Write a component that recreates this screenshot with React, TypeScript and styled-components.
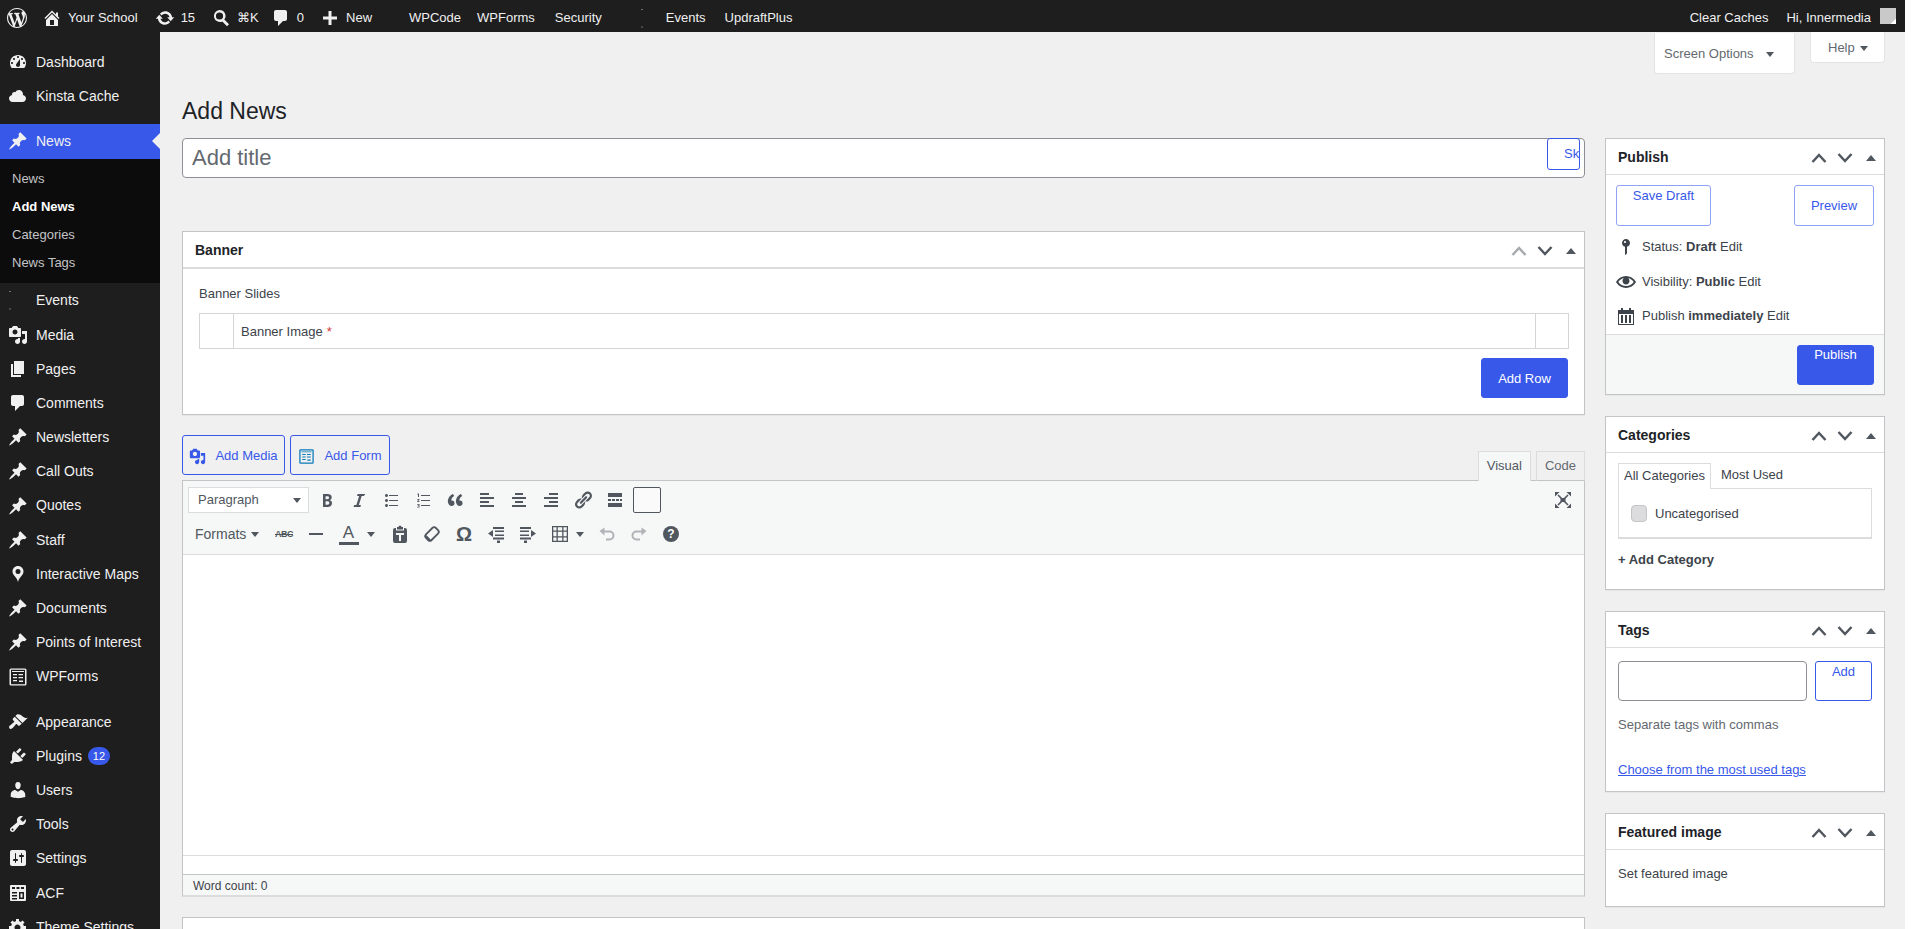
import { ReactNode } from 'react';
import styled, { createGlobalStyle } from 'styled-components';

const BLUE = '#3858e9';

const GlobalStyle = createGlobalStyle`
	html, body {
		margin: 0;
		height: 100%;
		overflow: hidden;
		background: #fff;
	}
	body {
		font-family: "Liberation Sans", Arial, sans-serif;
		font-size: 13px;
		line-height: 1.4;
		color: #3c434a;
	}
	* {
		box-sizing: border-box;
	}
`;

const Page = styled.div`
	width: 1905px;
	height: 929px;
	overflow: hidden;
	display: flex;
	flex-direction: column;
	background: #f0f0f1;
`;

const AdminBar = styled.header`
	flex: none;
	height: 32px;
	padding-top: 4px;
	display: flex;
	justify-content: space-between;
	background: #1e1e1e;
	color: #f0f0f1;
`;

const BarGroup = styled.div`
	display: flex;
	align-items: center;
`;

const BarItem = styled.div<{ $pad?: number; $left?: number }>`
	display: flex;
	align-items: center;
	gap: 6px;
	padding: 0 ${({ $pad }) => $pad ?? 8}px;
	margin-left: ${({ $left }) => $left ?? 0}px;
	white-space: nowrap;
	color: #f0f0f1;
	svg {
		color: #f0f0f1;
	}
`;

const Avatar = styled.span`
	width: 16px;
	height: 16px;
	margin-top: -4px;
	background: linear-gradient(135deg, #c9c9c9 82%, #fff 82%);
`;

const Body = styled.div`
	flex: 1;
	min-height: 0;
	display: flex;
`;

const Sidebar = styled.nav`
	flex: none;
	width: 160px;
	padding-top: 13px;
	background: #1e1e1e;
	overflow: hidden;
`;

const MenuItem = styled.a<{ $active?: boolean }>`
	position: relative;
	display: flex;
	align-items: center;
	height: 34.2px;
	padding-left: 8px;
	font-size: 14px;
	line-height: 18.2px;
	color: #f0f0f1;
	background: ${({ $active }) => ($active ? BLUE : 'transparent')};
	svg {
		flex: none;
		margin-right: 8px;
	}
	${({ $active }) =>
		$active &&
		`
		&::after {
			content: '';
			position: absolute;
			right: 0;
			top: 50%;
			margin-top: -8px;
			border: 8px solid transparent;
			border-right-color: #f0f0f1;
		}
	`}
`;

const MenuSeparator = styled.div`
	height: 11px;
`;

const SubMenu = styled.div`
	padding: 6px 0;
	background: #0c0c0c;
`;

const SubItem = styled.a<{ $current?: boolean }>`
	display: block;
	padding: 5px 12px;
	font-size: 13px;
	line-height: 18.2px;
	color: ${({ $current }) => ($current ? '#fff' : '#c3c4c7')};
	font-weight: ${({ $current }) => ($current ? 700 : 400)};
`;

const Badge = styled.span`
	margin-left: 6px;
	width: 22px;
	height: 18px;
	border-radius: 9px;
	background: ${BLUE};
	color: #fff;
	font-size: 11px;
	line-height: 18px;
	text-align: center;
`;

const Content = styled.main`
	flex: 1;
	min-width: 0;
	padding: 0 20px 0 22px;
	overflow: hidden;
`;

const ScreenMeta = styled.div`
	display: flex;
	justify-content: flex-end;
	align-items: flex-start;
	gap: 15px;
	height: 64px;
`;

const MetaTab = styled.button<{ $h: number; $w: number; $top?: number }>`
	display: flex;
	align-items: center;
	justify-content: space-between;
	width: ${({ $w }) => $w}px;
	height: ${({ $h }) => $h}px;
	margin-top: ${({ $top }) => $top ?? 0}px;
	padding: 3px ${({ $w }) => ($w > 100 ? '20px 0 9px' : '16px 0 17px')};
	background: #fff;
	border: 1px solid #e4e4e7;
	border-top: none;
	border-radius: 0 0 4px 4px;
	font: inherit;
	color: #646970;
`;

const Arrow = styled.span<{ $size?: number; $up?: boolean; $color?: string }>`
	display: inline-block;
	flex: none;
	width: 0;
	height: 0;
	border-left: ${({ $size }) => $size ?? 4}px solid transparent;
	border-right: ${({ $size }) => $size ?? 4}px solid transparent;
	${({ $up, $size, $color }) =>
		`${$up ? 'border-bottom' : 'border-top'}: ${($size ?? 4) + 1}px solid ${$color ?? '#50575e'};`}
`;

const Title = styled.h1`
	margin: 0 0 12px;
	font-size: 23px;
	font-weight: 400;
	line-height: 30px;
	color: #1d2327;
`;

const Columns = styled.div`
	display: flex;
	align-items: flex-start;
	gap: 20px;
`;

const MainColumn = styled.div`
	flex: 1;
	min-width: 0;
`;

const SideColumn = styled.aside`
	flex: none;
	width: 280px;
	display: flex;
	flex-direction: column;
	gap: 21px;
`;

const TitleWrap = styled.div`
	position: relative;
	height: 40px;
	margin-bottom: 53px;
`;

const TitleInput = styled.input`
	width: 100%;
	height: 40px;
	padding: 3px 9px;
	border: 1px solid #8c8f94;
	border-radius: 4px;
	background: #fff;
	font: 22px "Liberation Sans", Arial, sans-serif;
	&::placeholder {
		color: #646970;
		opacity: 1;
	}
`;

const SkipLink = styled.a`
	position: absolute;
	top: 0;
	right: 5px;
	width: 33px;
	height: 32px;
	padding-left: 16px;
	overflow: hidden;
	border: 1px solid ${BLUE};
	border-radius: 3px;
	background: #fff;
	color: ${BLUE};
	line-height: 30px;
	white-space: nowrap;
`;

const Box = styled.section`
	background: #fff;
	border: 1px solid #c3c4c7;
	box-shadow: 0 1px 1px rgba(0, 0, 0, 0.04);
`;

const BoxHead = styled.div<{ $thick?: boolean }>`
	display: flex;
	align-items: center;
	justify-content: space-between;
	height: ${({ $thick }) => ($thick ? 37 : 36)}px;
	padding: 3px 8px 0 12px;
	border-bottom: ${({ $thick }) => ($thick ? 2 : 1)}px solid #dcdcde;
	font-size: 14px;
	font-weight: 700;
	color: #1d2327;
`;

const Handles = styled.div`
	display: flex;
	align-items: center;
	gap: 10px;
`;

const HandleArrow = styled(Arrow)`
	margin-left: 3px;
`;

const BannerBody = styled.div`
	height: 145px;
	padding: 16px 15px 0 16px;
`;

const FieldLabel = styled.div`
	line-height: 18px;
	margin-bottom: 10px;
`;

const Repeater = styled.div`
	display: grid;
	grid-template-columns: 33px 1fr 33px;
	height: 36px;
	border: 1px solid #d5d5d8;
`;

const RepeaterCell = styled.div`
	display: flex;
	align-items: center;
	padding: 2px 0 0 7px;
	border-left: 1px solid #d5d5d8;
	&:first-child {
		border-left: none;
	}
`;

const Required = styled.span`
	margin-left: 4px;
	color: #d63638;
`;

const AddRow = styled.div`
	display: flex;
	justify-content: flex-end;
	padding: 9px 1px 0 0;
`;

const PrimaryButton = styled.button<{ $w: number; $top?: boolean }>`
	width: ${({ $w }) => $w}px;
	height: 40px;
	padding: ${({ $top }) => ($top ? '0' : '2px 0 0')};
	display: flex;
	align-items: ${({ $top }) => ($top ? 'flex-start' : 'center')};
	justify-content: center;
	border: 1px solid ${BLUE};
	border-radius: 3px;
	background: ${BLUE};
	color: #fff;
	font: inherit;
`;

const OutlineButton = styled.button<{ $w: number; $h?: number; $top?: boolean; $soft?: boolean }>`
	flex: none;
	width: ${({ $w }) => $w}px;
	height: ${({ $h }) => $h ?? 40}px;
	padding: ${({ $top }) => ($top ? '1px 0 0' : '2px 0 0')};
	display: flex;
	align-items: ${({ $top }) => ($top ? 'flex-start' : 'center')};
	justify-content: center;
	gap: 9px;
	border: 1px solid ${({ $soft }) => ($soft ? '#8fa2f3' : BLUE)};
	border-radius: 3px;
	background: transparent;
	color: ${BLUE};
	font: inherit;
`;

const MediaRow = styled.div`
	display: flex;
	justify-content: space-between;
	height: 45px;
	margin-top: 20px;
`;

const MediaButtons = styled.div`
	display: flex;
	gap: 5px;
`;

const EditorTabs = styled.div`
	display: flex;
	align-self: flex-end;
	gap: 5px;
`;

const EditorTab = styled.div<{ $active?: boolean }>`
	position: relative;
	top: 1px;
	height: 30px;
	padding: 0 8px;
	line-height: 28px;
	border: 1px solid #dcdcde;
	border-bottom: ${({ $active }) => ($active ? 'none' : '1px solid #c3c4c7')};
	background: ${({ $active }) => ($active ? '#f6f7f7' : '#f0f0f1')};
	color: ${({ $active }) => ($active ? '#50575e' : '#646970')};
`;

const Editor = styled.div`
	border: 1px solid #c3c4c7;
	border-bottom: 2px solid #dcdcde;
	background: #fff;
`;

const Toolbar = styled.div`
	height: 74px;
	padding: 5px 0 0 5px;
	background: #f6f7f7;
	border-bottom: 1px solid #dcdcde;
	color: #50575e;
`;

const ToolRow = styled.div<{ $h: number }>`
	display: flex;
	align-items: center;
	height: ${({ $h }) => $h}px;
`;

const FormatSelect = styled.div`
	flex: none;
	width: 121px;
	height: 26px;
	margin-right: 2px;
	padding: 0 7px 0 9px;
	display: flex;
	align-items: center;
	justify-content: space-between;
	background: #fff;
	border: 1px solid #dcdcde;
`;

const ToolButton = styled.div<{ $w?: number; $after?: number; $muted?: boolean }>`
	flex: none;
	width: ${({ $w }) => $w ?? 32}px;
	height: 28px;
	margin-right: ${({ $after }) => $after ?? 0}px;
	display: flex;
	align-items: center;
	justify-content: center;
	color: ${({ $muted }) => ($muted ? '#b0b3b7' : '#50575e')};
`;

const SelectedCell = styled.div`
	width: 28px;
	height: 26px;
	border: 1px solid #50575e;
	border-radius: 2px;
	background: #fafafa;
`;

const FullScreen = styled(ToolButton)`
	margin-left: auto;
	margin-right: 5px;
`;

const FormatsMenu = styled.div`
	flex: none;
	width: 80px;
	padding: 1px 0 0 7px;
	display: flex;
	align-items: center;
	gap: 5px;
	font-size: 14px;
`;

const StrikeLabel = styled.span`
	font-size: 9px;
	font-weight: 700;
	letter-spacing: -0.5px;
	text-decoration: line-through;
`;

const ColorLetter = styled.span`
	width: 20px;
	font-size: 17px;
	line-height: 18px;
	text-align: center;
	border-bottom: 3px solid #50575e;
`;

const OmegaLabel = styled.span`
	font-size: 20px;
	font-weight: 700;
	line-height: 20px;
`;

const HelpDot = styled.span`
	width: 16px;
	height: 16px;
	border-radius: 50%;
	background: #50575e;
	color: #fff;
	font-size: 12px;
	font-weight: 700;
	line-height: 16px;
	text-align: center;
`;

const WriteArea = styled.div`
	height: 301px;
	border-bottom: 1px solid #dcdcde;
`;

const EditorGap = styled.div`
	height: 18px;
`;

const StatusBar = styled.div`
	height: 21px;
	padding-left: 10px;
	border-top: 1px solid #c3c4c7;
	background: #f6f7f7;
	font-size: 12px;
	line-height: 22px;
`;

const NextBox = styled(Box)`
	height: 60px;
	margin-top: 20px;
`;

const PublishActions = styled.div`
	display: flex;
	justify-content: space-between;
	padding: 10px 10px 0;
`;

const MetaRows = styled.div`
	padding: 4px 0 0 10px;
`;

const MetaRow = styled.div`
	display: flex;
	align-items: center;
	gap: 6px;
	height: 34.5px;
`;

const PublishFoot = styled.div`
	display: flex;
	justify-content: flex-end;
	height: 60.5px;
	padding: 10px 10px 0;
	border-top: 1px solid #dcdcde;
	background: #f6f7f7;
`;

const SideBody = styled.div<{ $h: number }>`
	height: ${({ $h }) => $h}px;
	padding: 9px 12px 0;
`;

const CatTabs = styled.div`
	display: flex;
	align-items: flex-end;
	height: 26px;
`;

const CatTab = styled.div<{ $active?: boolean }>`
	height: 26px;
	padding: 0 ${({ $active }) => ($active ? '5px 0 5px' : '10px 0 9px')};
	line-height: 24px;
	border: 1px solid ${({ $active }) => ($active ? '#dcdcde' : 'transparent')};
	border-bottom: none;
	margin-bottom: ${({ $active }) => ($active ? '-1px' : '0')};
	background: #fff;
	position: relative;
	z-index: 1;
`;

const CatPanel = styled.div`
	display: flex;
	align-items: center;
	gap: 8px;
	height: 51px;
	padding-left: 12px;
	border: 1px solid #dcdcde;
	border-bottom-width: 2px;
`;

const CatLabel = styled.span`
	padding-top: 3px;
`;

const FakeCheck = styled.span`
	width: 16px;
	height: 17px;
	background: #dcdcde;
	border: 1px solid #c3c4c7;
	border-radius: 4px;
`;

const AddCategory = styled.div`
	margin-top: 11px;
	font-weight: 700;
	line-height: 20px;
`;

const TagForm = styled.div`
	display: flex;
	justify-content: space-between;
	padding-top: 4px;
`;

const TagInput = styled.input`
	width: 189px;
	height: 40px;
	border: 1px solid #8c8f94;
	border-radius: 4px;
	background: #fff;
`;

const Hint = styled.div`
	margin-top: 15px;
	line-height: 18px;
	color: #646970;
`;

const TagLink = styled.a`
	display: block;
	margin-top: 27px;
	color: ${BLUE};
	line-height: 18px;
	text-decoration: underline;
`;

const PlainLine = styled.div`
	padding-top: 6px;
	line-height: 18px;
`;

function Dash({ d, size = 20 }: { d: string; size?: number }) {
	return (
		<svg width={size} height={size} viewBox="0 0 20 20" fill="currentColor">
			<path d={d} fillRule="evenodd" />
		</svg>
	);
}

const PIN =
	'M10.44 3.02l1.82-1.82 6.36 6.35-1.83 1.82c-1.05-.68-2.48-.57-3.41.36l-.75.75c-.92.93-1.04 2.35-.35 3.41l-1.83 1.82-2.41-2.41-2.8 2.79c-.42.42-3.38 2.71-3.8 2.29s1.86-3.39 2.28-3.81l2.79-2.79L4.1 9.36l1.83-1.82c1.05.69 2.48.57 3.4-.36l.75-.75c.93-.92 1.05-2.35.36-3.41z';
const MEDIA =
	'M13 11V4c0-.55-.45-1-1-1h-1.67L9 1H5L3.67 3H2c-.55 0-1 .45-1 1v7c0 .55.45 1 1 1h10c.55 0 1-.45 1-1zM7 4.5c1.38 0 2.5 1.12 2.5 2.5S8.38 9.5 7 9.5 4.5 8.38 4.5 7 5.62 4.5 7 4.5zM14 6h5v10.5c0 1.38-1.12 2.5-2.5 2.5S14 17.88 14 16.5s1.12-2.5 2.5-2.5c.17 0 .34.02.5.05V9h-3V6zm-4 8.05V13h2v3.5c0 1.38-1.12 2.5-2.5 2.5S7 17.88 7 16.5 8.12 14 9.5 14c.17 0 .34.02.5.05z';
const COMMENT =
	'M5 2h9c1.1 0 2 .9 2 2v7c0 1.1-.9 2-2 2h-2l-5 5v-5H5c-1.1 0-2-.9-2-2V4c0-1.1.9-2 2-2z';
const WP_LOGO =
	'M20 10c0-5.51-4.49-10-10-10C4.48 0 0 4.49 0 10c0 5.52 4.48 10 10 10 5.51 0 10-4.48 10-10zM7.78 15.37L4.37 6.22c.55-.02 1.17-.08 1.17-.08.5-.06.44-1.13-.06-1.11 0 0-1.45.11-2.37.11-.18 0-.37 0-.58-.01C4.12 2.69 6.87 1.11 10 1.11c2.33 0 4.45.87 6.05 2.34-.68-.11-1.65.39-1.65 1.58 0 .74.45 1.36.9 2.1.35.61.55 1.36.55 2.46 0 1.49-1.4 5-1.4 5l-3.03-8.37c.54-.02.82-.17.82-.17.5-.05.44-1.25-.06-1.22 0 0-1.44.12-2.38.12-.87 0-2.33-.12-2.33-.12-.5-.03-.56 1.2-.06 1.22l.92.08 1.26 3.41zM17.41 10c.24-.64.74-1.87.43-4.25.7 1.29 1.05 2.71 1.05 4.25 0 3.29-1.73 6.24-4.4 7.78.97-2.59 1.94-5.2 2.92-7.78zM6.1 18.09C3.12 16.65 1.11 13.53 1.11 10c0-1.3.23-2.48.72-3.59C3.25 10.3 4.67 14.2 6.1 18.09zm4.03-6.63l2.58 6.98c-.86.29-1.76.45-2.71.45-.79 0-1.57-.11-2.29-.33.81-2.38 1.62-4.74 2.42-7.1z';
const HOME =
	'M16 8.5l1.53 1.53-1.06 1.06L10 4.62l-6.47 6.47-1.06-1.06L10 2.5l4 4v-2h2v4zm-6-2.46l6 5.99V18H4v-5.97zM12 17v-5H8v5h4z';
const UPDATE =
	'M10.2 3.28c3.53 0 6.43 2.61 6.92 6h2.08l-3.5 4-3.5-4h2.32c-.45-1.97-2.21-3.45-4.32-3.45-1.45 0-2.73.71-3.54 1.78L4.95 5.66C6.23 4.2 8.11 3.28 10.2 3.28zm-.4 13.44c-3.52 0-6.43-2.61-6.92-6H.8l3.5-4c1.17 1.33 2.33 2.67 3.5 4H5.48c.45 1.97 2.21 3.45 4.32 3.45 1.45 0 2.73-.71 3.54-1.78l1.71 1.95c-1.28 1.46-3.15 2.38-5.25 2.38z';
const SEARCH =
	'M8.5 2a6 6 0 014.8 9.6l4.7 4.7-2 2-4.7-4.8A6 6 0 118.5 2zm0 2.4a3.6 3.6 0 100 7.2 3.6 3.6 0 000-7.2z';
const PLUS = 'M17 8.5v3h-5.5V17h-3v-5.5H3v-3h5.5V3h3v5.5H17z';
const DASHBOARD =
	'M3.76 16h12.48c1.1-1.37 1.76-3.11 1.76-5 0-4.42-3.58-8-8-8s-8 3.58-8 8c0 1.89.66 3.63 1.76 5zM10 4c.55 0 1 .45 1 1s-.45 1-1 1-1-.45-1-1 .45-1 1-1zM6 6c.55 0 1 .45 1 1s-.45 1-1 1-1-.45-1-1 .45-1 1-1zm8 0c.55 0 1 .45 1 1s-.45 1-1 1-1-.45-1-1 .45-1 1-1zM8.63 11.55L12 7v6c0 1.1-.9 2-2 2s-2-.9-2-2c0-.57.24-1.08.63-1.45zM4 10c.55 0 1 .45 1 1s-.45 1-1 1-1-.45-1-1 .45-1 1-1zm12 0c.55 0 1 .45 1 1s-.45 1-1 1-1-.45-1-1 .45-1 1-1z';
const CLOUD =
	'M14.9 9c1.8.2 3.1 1.7 3.1 3.5 0 1.9-1.6 3.5-3.5 3.5h-10C2.6 16 1 14.4 1 12.5 1 10.7 2.3 9.3 4.1 9 4 8.9 4 8.7 4 8.5 4 7.1 5.1 6 6.5 6c.3 0 .7.1.9.2C8.1 4.9 9.4 4 11 4c2.2 0 4 1.8 4 4 0 .4-.1.7-.1 1z';
const PAGE = 'M6 15V2h10v13H6zm-1 1h8v2H3V5h2v11z';
const MAP_PIN =
	'M10 2C6.9 2 4.5 4.4 4.5 7.5c0 1.9 1 3.3 2.1 4.5 1.3 1.5 2.7 3.2 3.4 6 .7-2.8 2.1-4.5 3.4-6 1.1-1.2 2.1-2.6 2.1-4.5C15.5 4.4 13.1 2 10 2zm0 3a2.5 2.5 0 110 5 2.5 2.5 0 010-5z';
const APPEARANCE =
	'M14.48 11.06L7.41 3.99l1.5-1.5c.5-.56 2.3-.47 3.51.32 1.21.8 1.43 1.28 2.91 2.1 1.18.64 2.45 1.26 4.45.85zm-.71.71L6.7 4.7 4.93 6.47c-.39.39-.39 1.02 0 1.41l1.06 1.06c.39.39.39 1.03 0 1.42-.6.6-1.43 1.11-2.21 1.69-.35.26-.7.53-1.01.84C1.43 13.23.4 14.67 1.6 16.4c1.2 1.2 2.4.2 3.56-.8.31-.31.58-.66.84-1.01.58-.78 1.09-1.61 1.69-2.21.39-.39 1.02-.39 1.41 0l1.06 1.06c.39.39 1.02.39 1.41 0z';
const PLUGINS =
	'M13.11 4.36L9.87 7.6 8 5.73l3.24-3.24c.35-.34 1.05-.2 1.56.32.52.51.66 1.21.31 1.55zm-8 1.77l.91-1.12 9.01 9.01-1.19.84c-.71.71-2.63 1.16-3.82 1.16H6.14L4.9 17.26c-.59.59-1.54.59-2.12 0-.59-.58-.59-1.53 0-2.12l1.24-1.24v-3.88c0-1.13.4-3.19 1.09-3.89zm7.26 3.97l3.24-3.24c.34-.35 1.04-.21 1.55.31.52.51.66 1.21.31 1.55l-3.24 3.25z';
const USERS =
	'M10 9.25c-2.27 0-2.73-3.44-2.73-3.44C7 4.02 7.82 2 9.97 2c2.16 0 2.98 2.02 2.71 3.81 0 0-.41 3.44-2.68 3.44zm0 2.57L12.72 10c2.39 0 4.52 2.33 4.52 4.53v2.49s-3.65 1.13-7.24 1.13c-3.65 0-7.24-1.13-7.24-1.13v-2.49c0-2.25 1.94-4.48 4.47-4.48z';
const TOOLS =
	'M16.68 9.77c-1.34 1.34-3.3 1.67-4.95.99l-5.41 6.52c-.99.99-2.59.99-3.58 0s-.99-2.59 0-3.57l6.52-5.42c-.68-1.65-.35-3.61.99-4.95 1.28-1.28 3.12-1.62 4.72-1.06l-2.89 2.89 2.82 2.82 2.86-2.87c.53 1.58.18 3.39-1.08 4.65zM3.81 16.21c.4.39 1.04.39 1.43 0 .4-.4.4-1.04 0-1.43-.39-.4-1.03-.4-1.43 0-.39.39-.39 1.03 0 1.43z';
const SETTINGS =
	'M18 16V4c0-1.1-.9-2-2-2H4c-1.1 0-2 .9-2 2v12c0 1.1.9 2 2 2h12c1.1 0 2-.9 2-2zM8 11h1c.55 0 1 .45 1 1s-.45 1-1 1H8v1.5c0 .28-.22.5-.5.5s-.5-.22-.5-.5V13H6c-.55 0-1-.45-1-1s.45-1 1-1h1V5.5c0-.28.22-.5.5-.5s.5.22.5.5V11zm5-2h-1c-.55 0-1-.45-1-1s.45-1 1-1h1V5.5c0-.28.22-.5.5-.5s.5.22.5.5V7h1c.55 0 1 .45 1 1s-.45 1-1 1h-1v5.5c0 .28-.22.5-.5.5s-.5-.22-.5-.5V9z';
const ACF =
	'M3 2h14a1 1 0 011 1v14a1 1 0 01-1 1H3a1 1 0 01-1-1V3a1 1 0 011-1zm1 2v2h3V4H4zm4.5 0v2h3V4h-3zM13 4v2h3V4h-3zM4 9v1.5h5V9H4zm7 0v7h5V9h-5zm1.5 1.5h2v4h-2v-4zM4 12v1.5h5V12H4zm0 3v1.5h5V15H4z';
const GEAR =
	'M18 12h-2.18c-.17.7-.44 1.35-.81 1.93l1.54 1.54-2.1 2.1-1.54-1.54c-.58.36-1.23.63-1.91.79V19H8v-2.18c-.68-.16-1.33-.43-1.91-.79l-1.54 1.54-2.12-2.12 1.54-1.54c-.36-.58-.63-1.23-.79-1.91H1V9.03h2.17c.16-.7.44-1.35.8-1.94L2.43 5.55l2.1-2.1 1.54 1.54c.58-.37 1.24-.64 1.93-.81V2h3v2.18c.68.16 1.33.43 1.91.79l1.54-1.54 2.12 2.12-1.54 1.54c.36.59.64 1.24.8 1.94H18V12zm-8.5 1.5c1.66 0 3-1.34 3-3s-1.34-3-3-3-3 1.34-3 3 1.34 3 3 3z';
const FORMS =
	'M3 1.5h14A1.5 1.5 0 0118.5 3v14a1.5 1.5 0 01-1.5 1.5H3A1.5 1.5 0 011.5 17V3A1.5 1.5 0 013 1.5zm0 1.3V17.2h14V2.8H3zM4 4h12v1H4V4zm1 3h4v1.2H5V7zm5.5 0H15v1.2h-4.5V7zM5 10h4v1.2H5V10zm5.5 0H15v1.2h-4.5V10zM11 13.5h4V15h-4v-1.5zM5 13h4v1.2H5V13z';
const POST_STATUS =
	'M14 6c0 1.86-1.28 3.41-3 3.86V16c0 1-2 2-2 2V9.86c-1.72-.45-3-2-3-3.86 0-2.21 1.79-4 4-4s4 1.79 4 4zM8 5c0 .55.45 1 1 1s1-.45 1-1-.45-1-1-1-1 .45-1 1z';
const EYE =
	'M19.7 9.4C17.7 6 14 3.9 10 3.9S2.3 6 .3 9.4L0 10l.3.6c2 3.4 5.7 5.5 9.7 5.5s7.7-2.1 9.7-5.5l.3-.6-.3-.6zM10 14.1c-3.1 0-6-1.6-7.7-4.1C3.6 8 5.7 6.6 8 6.1c-.9.6-1.5 1.7-1.5 2.9 0 1.9 1.6 3.5 3.5 3.5s3.5-1.6 3.5-3.5c0-1.2-.6-2.3-1.5-2.9 2.3.5 4.4 1.9 5.7 3.9-1.7 2.5-4.6 4.1-7.7 4.1z';
const CALENDAR =
	'M15 4h3v15H2V4h3V2h2v2h6V2h2v2zM3 8v10h14V8H3zm2 1h2v8H5V9zm4 0h2v8H9V9zm4 0h2v8h-2V9z';

const BOLD =
	'M6 4v13h4.54c1.37 0 2.46-.33 3.26-1 .8-.66 1.2-1.58 1.2-2.77 0-.84-.17-1.51-.51-2.01s-.9-.85-1.67-1.03v-.09c.57-.1 1.02-.4 1.36-.9s.51-1.13.51-1.91c0-1.14-.39-1.98-1.17-2.5C12.75 4.26 11.5 4 9.78 4H6zm2.57 5.15V6.26h1.36c.73 0 1.27.11 1.61.32.34.22.51.58.51 1.07 0 .54-.16.92-.47 1.15s-.82.35-1.51.35h-.5zm0 2.19h1.6c1.44 0 2.16.53 2.16 1.61 0 .6-.17 1.05-.51 1.34s-.86.43-1.57.43H8.57v-3.38z';
const ITALIC = 'M14.78 6h-2.13l-2.8 9h2.12l-.62 2H4.6l.62-2h2.14l2.8-9H8.03l.62-2h7.75z';
const UL =
	'M5.5 7C4.67 7 4 6.33 4 5.5 4 4.68 4.67 4 5.5 4 6.32 4 7 4.68 7 5.5 7 6.33 6.32 7 5.5 7zM8 5h9v1H8V5zm-2.5 7c-.83 0-1.5-.67-1.5-1.5C4 9.68 4.67 9 5.5 9c.82 0 1.5.68 1.5 1.5 0 .83-.68 1.5-1.5 1.5zM8 10h9v1H8v-1zm-2.5 7c-.83 0-1.5-.67-1.5-1.5 0-.82.67-1.5 1.5-1.5.82 0 1.5.68 1.5 1.5 0 .83-.68 1.5-1.5 1.5zM8 15h9v1H8v-1z';
const OL =
	'M8 5h9v1H8V5zm0 5h9v1H8v-1zm0 5h9v1H8v-1zM5 3.5h1V7H5V4.5H4.3v-.6L5 3.5zM4.2 9h2.3v.8l-1.3 1.4h1.3v.8H4.2v-.8l1.3-1.4H4.2V9zm0 5h2.3v3.5H4.2v-.8h1.4v-.6H4.7v-.7h.9v-.6H4.2V14z';
const QUOTE =
	'M9.49 13.22c0-.74-.2-1.38-.61-1.9-.62-.78-1.83-.88-2.53-.72-.29-1.65 1.11-3.75 2.92-4.65L7.88 4c-2.73 1.3-5.42 4.28-4.96 8.05C3.21 14.43 4.59 16 6.54 16c.85 0 1.56-.25 2.12-.75s.83-1.18.83-2.03zm8.05 0c0-.74-.2-1.38-.61-1.9-.63-.78-1.83-.88-2.53-.72-.29-1.65 1.11-3.75 2.92-4.65L15.93 4c-2.73 1.3-5.41 4.28-4.95 8.05.29 2.38 1.66 3.95 3.61 3.95.85 0 1.56-.25 2.12-.75s.83-1.18.83-2.03z';
const ALIGN_LEFT = 'M12 5V3H3v2h9zm5 4V7H3v2h14zm-5 4v-2H3v2h9zm5 4v-2H3v2h14z';
const ALIGN_CENTER = 'M14 5V3H6v2h8zm3 4V7H3v2h14zm-3 4v-2H6v2h8zm3 4v-2H3v2h14z';
const ALIGN_RIGHT = 'M17 5V3H8v2h9zm0 4V7H3v2h14zm0 4v-2H8v2h9zm0 4v-2H3v2h14z';
const LINK =
	'M17.74 2.76c1.68 1.69 1.68 4.41 0 6.1l-1.53 1.52c-1.12 1.12-2.7 1.47-4.14 1.09l2.62-2.61.76-.77.76-.76c.84-.84.84-2.2 0-3.04-.84-.85-2.2-.85-3.04 0l-.77.76-3.38 3.38c-.37-1.44-.02-3.02 1.1-4.14l1.52-1.53c1.69-1.68 4.42-1.68 6.1 0zM8.59 13.43l5.34-5.34c.42-.42.42-1.1 0-1.52-.44-.43-1.13-.39-1.53 0l-5.33 5.34c-.42.42-.42 1.1 0 1.52.44.43 1.13.39 1.52 0zm-.76 2.29l4.14-4.15c.38 1.44.03 3.02-1.09 4.14l-1.52 1.53c-1.69 1.68-4.41 1.68-6.1 0-1.68-1.68-1.68-4.42 0-6.1l1.53-1.52c1.12-1.12 2.7-1.47 4.14-1.1l-4.14 4.15c-.85.84-.85 2.2 0 3.05.84.84 2.2.84 3.04 0z';
const MORE = 'M17 7V3H3v4h14zM3 9h3v2H3V9zm4 0h3v2H7V9zm4 0h3v2h-3V9zm4 0h2v2h-2V9zm2 4v4H3v-4h14z';
const RULE = 'M17 9v2H3V9h14z';
const PASTE =
	'M7 3h1.5a1.5 1.5 0 013 0H13v2.5H7V3zM5 4h1v2.5h8V4h1a2 2 0 012 2v11a2 2 0 01-2 2H5a2 2 0 01-2-2V6a2 2 0 012-2zm1 5v2h3v6h2v-6h3V9H6z';
const OUTDENT =
	'M7 3h11v2H7V3zm2 3.5h9V8H9V6.5zM2 9.5L7 6v7L2 9.5zM9 10.500h9V12H9v-1.500zM7 13.500h11v2H7v-2zM11 16.500h3V19h-3v-2.500z';
const INDENT =
	'M2 3h11v2H2V3zm0 3.500h9V8H2V6.500zM18 9.500L13 6v7l5-3.500zM2 10.500h9V12H2v-1.500zM2 13.500h11v2H2v-2zM6 16.500h3V19H6v-2.500z';
const TABLE =
	'M2 2h16v16H2V2zm1.300 1.300v3.200h3.200V3.300H3.300zm4.500 0v3.200h4.400V3.300H7.800zm5.700 0v3.200h3.200V3.300h-3.200zM3.300 7.800v4.400h3.200V7.800H3.300zm4.500 0v4.400h4.400V7.800H7.800zm5.700 0v4.400h3.200V7.800h-3.200zM3.300 13.500v3.200h3.200v-3.200H3.300zm4.500 0v3.200h4.400v-3.200H7.800zm5.700 0v3.200h3.200v-3.200h-3.200z';
const UNDO = 'M7.500 3.500v3h5a5 5 0 010 10H9v-2h3.500a3 3 0 000-6h-5v3L2.500 7l5-3.500z';
const REDO = 'M12.500 3.500v3h-5a5 5 0 000 10H11v-2H7.500a3 3 0 010-6h5v3L17.500 7l-5-3.500z';

function TinyDots() {
	return (
		<svg width="20" height="20" viewBox="0 0 20 20" fill="#c3c4c7">
			<rect x="1.5" y="1" width="1" height="1" />
			<rect x="1.5" y="18.5" width="1" height="1" />
		</svg>
	);
}

function Eraser() {
	return (
		<svg width="20" height="20" viewBox="0 0 20 20" fill="none" stroke="currentColor">
			<rect x="3" y="6" width="14" height="8" rx="2.5" strokeWidth="1.8" transform="rotate(-45 10 10)" />
			<path d="M4.5 11.5l4 4-1 1-4-4z" fill="currentColor" strokeWidth="0.5" />
		</svg>
	);
}

function Expand() {
	return (
		<svg width="20" height="20" viewBox="0 0 20 20" fill="currentColor">
			<path d="M2 2h4.500L2 6.500zM18 2v4.500L13.500 2zM2 18v-4.500L6.500 18zM18 18h-4.500l4.500-4.500z" />
			<path d="M5 5l10 10M15 5L5 15" stroke="currentColor" strokeWidth="1.6" />
			<rect x="7.5" y="8" width="5" height="4" />
		</svg>
	);
}

function Chevron({ up, faded }: { up?: boolean; faded?: boolean }) {
	return (
		<svg width="16" height="12" viewBox="0 0 16 12" fill="none" stroke={faded ? '#a7aaad' : '#50575e'} strokeWidth="2.5">
			<polyline points={up ? '1.5,10 8,3 14.5,10' : '1.5,2 8,9 14.5,2'} />
		</svg>
	);
}

function BoxHandles({ faded }: { faded?: boolean }) {
	return (
		<Handles>
			<Chevron up faded={faded} />
			<Chevron />
			<HandleArrow $up $size={5} $color="#50575e" />
		</Handles>
	);
}

function SideBox({ title, children }: { title: string; children: ReactNode }) {
	return (
		<Box>
			<BoxHead>
				<span>{title}</span>
				<BoxHandles />
			</BoxHead>
			{children}
		</Box>
	);
}

const MENU_TOP = [
	{ label: 'Dashboard', icon: DASHBOARD },
	{ label: 'Kinsta Cache', icon: CLOUD },
];

const MENU_MIDDLE = [
	{ label: 'Media', icon: MEDIA },
	{ label: 'Pages', icon: PAGE },
	{ label: 'Comments', icon: COMMENT },
	{ label: 'Newsletters', icon: PIN },
	{ label: 'Call Outs', icon: PIN },
	{ label: 'Quotes', icon: PIN },
	{ label: 'Staff', icon: PIN },
	{ label: 'Interactive Maps', icon: MAP_PIN },
	{ label: 'Documents', icon: PIN },
	{ label: 'Points of Interest', icon: PIN },
	{ label: 'WPForms', icon: FORMS },
];

const MENU_BOTTOM = [
	{ label: 'Appearance', icon: APPEARANCE },
	{ label: 'Plugins', icon: PLUGINS, badge: '12' },
	{ label: 'Users', icon: USERS },
	{ label: 'Tools', icon: TOOLS },
	{ label: 'Settings', icon: SETTINGS },
	{ label: 'ACF', icon: ACF },
	{ label: 'Theme Settings', icon: GEAR },
];

const TOOLS_ROW_ONE = [BOLD, ITALIC, UL, OL, QUOTE, ALIGN_LEFT, ALIGN_CENTER, ALIGN_RIGHT, LINK, MORE];

export default function App() {
	return (
		<Page>
			<GlobalStyle />
			<AdminBar>
				<BarGroup>
					<BarItem $pad={7}>
						<Dash d={WP_LOGO} />
					</BarItem>
					<BarItem>
						<Dash d={HOME} />
						Your School
					</BarItem>
					<BarItem $left={1}>
						<Dash d={UPDATE} />
						15
					</BarItem>
					<BarItem>
						<Dash d={SEARCH} />
						⌘K
					</BarItem>
					<BarItem $left={-4}>
						<Dash d={COMMENT} />0
					</BarItem>
					<BarItem>
						<Dash d={PLUS} />
						New
					</BarItem>
					<BarItem $left={21}>WPCode</BarItem>
					<BarItem>WPForms</BarItem>
					<BarItem $left={4}>Security</BarItem>
					<BarItem $left={22}>
						<TinyDots />
					</BarItem>
					<BarItem $pad={0} $left={-10} />
					<BarItem>Events</BarItem>
					<BarItem $left={3}>UpdraftPlus</BarItem>
				</BarGroup>
				<BarGroup>
					<BarItem>Clear Caches</BarItem>
					<BarItem $left={10} $pad={0}>
						Hi, Innermedia
					</BarItem>
					<BarItem $pad={9}>
						<Avatar />
					</BarItem>
				</BarGroup>
			</AdminBar>
			<Body>
				<Sidebar>
					{MENU_TOP.map(item => (
						<MenuItem key={item.label}>
							<Dash d={item.icon} />
							{item.label}
						</MenuItem>
					))}
					<MenuSeparator />
					<MenuItem $active>
						<Dash d={PIN} />
						News
					</MenuItem>
					<SubMenu>
						<SubItem>News</SubItem>
						<SubItem $current>Add News</SubItem>
						<SubItem>Categories</SubItem>
						<SubItem>News Tags</SubItem>
					</SubMenu>
					<MenuItem>
						<TinyDots />
						Events
					</MenuItem>
					{MENU_MIDDLE.map(item => (
						<MenuItem key={item.label}>
							<Dash d={item.icon} />
							{item.label}
						</MenuItem>
					))}
					<MenuSeparator />
					{MENU_BOTTOM.map(item => (
						<MenuItem key={item.label}>
							<Dash d={item.icon} />
							{item.label}
							{item.badge && <Badge>{item.badge}</Badge>}
						</MenuItem>
					))}
				</Sidebar>
				<Content>
					<ScreenMeta>
						<MetaTab $w={141} $h={41} $top={1}>
							Screen Options
							<Arrow />
						</MetaTab>
						<MetaTab $w={75} $h={31}>
							Help
							<Arrow />
						</MetaTab>
					</ScreenMeta>
					<Title>Add News</Title>
					<Columns>
						<MainColumn>
							<TitleWrap>
								<TitleInput placeholder="Add title" />
								<SkipLink>Sk</SkipLink>
							</TitleWrap>
							<Box>
								<BoxHead $thick>
									<span>Banner</span>
									<BoxHandles faded />
								</BoxHead>
								<BannerBody>
									<FieldLabel>Banner Slides</FieldLabel>
									<Repeater>
										<RepeaterCell />
										<RepeaterCell>
											Banner Image<Required>*</Required>
										</RepeaterCell>
										<RepeaterCell />
									</Repeater>
									<AddRow>
										<PrimaryButton $w={87}>Add Row</PrimaryButton>
									</AddRow>
								</BannerBody>
							</Box>
							<MediaRow>
								<MediaButtons>
									<OutlineButton $w={103}>
										<Dash d={MEDIA} size={17} />
										Add Media
									</OutlineButton>
									<OutlineButton $w={100}>
										<svg width="17" height="17" viewBox="0 0 20 20" fill="#0a7ab8">
											<path d={FORMS} fillRule="evenodd" />
										</svg>
										Add Form
									</OutlineButton>
								</MediaButtons>
								<EditorTabs>
									<EditorTab $active>Visual</EditorTab>
									<EditorTab>Code</EditorTab>
								</EditorTabs>
							</MediaRow>
							<Editor>
								<Toolbar>
									<ToolRow $h={28}>
										<FormatSelect>
											Paragraph
											<Arrow />
										</FormatSelect>
										{TOOLS_ROW_ONE.map(icon => (
											<ToolButton key={icon}>
												<Dash d={icon} />
											</ToolButton>
										))}
										<ToolButton>
											<SelectedCell />
										</ToolButton>
										<FullScreen>
											<Expand />
										</FullScreen>
									</ToolRow>
									<ToolRow $h={40}>
										<FormatsMenu>
											Formats
											<Arrow />
										</FormatsMenu>
										<ToolButton>
											<StrikeLabel>ABC</StrikeLabel>
										</ToolButton>
										<ToolButton>
											<Dash d={RULE} />
										</ToolButton>
										<ToolButton $w={33}>
											<ColorLetter>A</ColorLetter>
										</ToolButton>
										<ToolButton $w={12} $after={7}>
											<Arrow />
										</ToolButton>
										<ToolButton>
											<Dash d={PASTE} />
										</ToolButton>
										<ToolButton>
											<Eraser />
										</ToolButton>
										<ToolButton>
											<OmegaLabel>Ω</OmegaLabel>
										</ToolButton>
										<ToolButton>
											<Dash d={OUTDENT} />
										</ToolButton>
										<ToolButton>
											<Dash d={INDENT} />
										</ToolButton>
										<ToolButton>
											<Dash d={TABLE} />
										</ToolButton>
										<ToolButton $w={8} $after={7}>
											<Arrow />
										</ToolButton>
										<ToolButton $muted>
											<Dash d={UNDO} />
										</ToolButton>
										<ToolButton $muted>
											<Dash d={REDO} />
										</ToolButton>
										<ToolButton>
											<HelpDot>?</HelpDot>
										</ToolButton>
									</ToolRow>
								</Toolbar>
								<WriteArea />
								<EditorGap />
								<StatusBar>Word count: 0</StatusBar>
							</Editor>
							<NextBox />
						</MainColumn>
						<SideColumn>
							<SideBox title="Publish">
								<PublishActions>
									<OutlineButton $w={95} $h={41} $top $soft>
										Save Draft
									</OutlineButton>
									<OutlineButton $w={80} $h={41} $soft>
										Preview
									</OutlineButton>
								</PublishActions>
								<MetaRows>
									<MetaRow>
										<Dash d={POST_STATUS} />
										<span>
											Status: <b>Draft</b> Edit
										</span>
									</MetaRow>
									<MetaRow>
										<Dash d={EYE} />
										<span>
											Visibility: <b>Public</b> Edit
										</span>
									</MetaRow>
									<MetaRow>
										<Dash d={CALENDAR} />
										<span>
											Publish <b>immediately</b> Edit
										</span>
									</MetaRow>
								</MetaRows>
								<PublishFoot>
									<PrimaryButton $w={77} $top>
										Publish
									</PrimaryButton>
								</PublishFoot>
							</SideBox>
							<SideBox title="Categories">
								<SideBody $h={136}>
									<CatTabs>
										<CatTab $active>All Categories</CatTab>
										<CatTab>Most Used</CatTab>
									</CatTabs>
									<CatPanel>
										<FakeCheck />
										<CatLabel>Uncategorised</CatLabel>
									</CatPanel>
									<AddCategory>+ Add Category</AddCategory>
								</SideBody>
							</SideBox>
							<SideBox title="Tags">
								<SideBody $h={143}>
									<TagForm>
										<TagInput />
										<OutlineButton $w={57} $top>
											Add
										</OutlineButton>
									</TagForm>
									<Hint>Separate tags with commas</Hint>
									<TagLink>Choose from the most used tags</TagLink>
								</SideBody>
							</SideBox>
							<SideBox title="Featured image">
								<SideBody $h={56}>
									<PlainLine>Set featured image</PlainLine>
								</SideBody>
							</SideBox>
						</SideColumn>
					</Columns>
				</Content>
			</Body>
		</Page>
	);
}
